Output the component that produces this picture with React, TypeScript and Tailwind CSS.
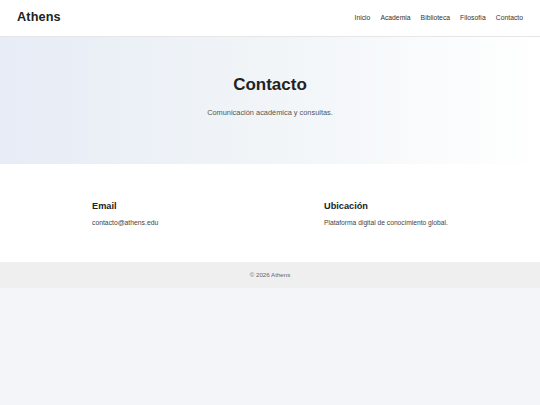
export default function App() {
  const nav = ["Inicio", "Academia", "Biblioteca", "Filosofía", "Contacto"];

  return (
    <div className="min-h-screen bg-[#f4f5f9] font-['Liberation_Sans',Arial,sans-serif]">
      {/* Header */}
      <header className="flex h-[37px] items-center justify-between border-b border-[#e6e6e6] bg-white px-[17px]">
        <span className="text-[12.7px] font-bold tracking-[0.01em] text-[#222]">Athens</span>
        <nav className="flex items-center gap-[10px]">
          {nav.map((item) => (
            <a key={item} className="text-[6.8px] text-[#333]">
              {item}
            </a>
          ))}
        </nav>
      </header>

      {/* Hero */}
      <section className="h-[127px] bg-linear-to-r from-[#e7ecf6] via-[#f1f5f8] to-white pt-[38px] text-center">
        <h1 className="text-[17px] font-bold leading-[1.2] text-[#222]">Contacto</h1>
        <p className="mt-[12px] text-[7.4px] leading-[1.6] text-[#555]">
          Comunicación académica y consultas.
        </p>
      </section>

      {/* Contact info */}
      <section className="h-[98px] bg-white pt-[37px]">
        <div className="mx-auto grid w-[356px] grid-cols-2 gap-x-[108px]">
          <div>
            <h3 className="text-[9.2px] font-bold leading-[1.2] text-[#222]">Email</h3>
            <p className="mt-[6px] text-[6.8px] leading-[1.6] text-[#444]">contacto@athens.edu</p>
          </div>
          <div>
            <h3 className="text-[9.2px] font-bold leading-[1.2] text-[#222]">Ubicación</h3>
            <p className="mt-[6px] whitespace-nowrap text-[6.7px] leading-[1.6] text-[#444]">
              Plataforma digital de conocimiento global.
            </p>
          </div>
        </div>
      </section>

      {/* Footer */}
      <footer className="flex h-[26px] items-center justify-center bg-[#efefef]">
        <span className="text-[6.2px] text-[#666]">© 2026 Athens</span>
      </footer>
    </div>
  );
}
